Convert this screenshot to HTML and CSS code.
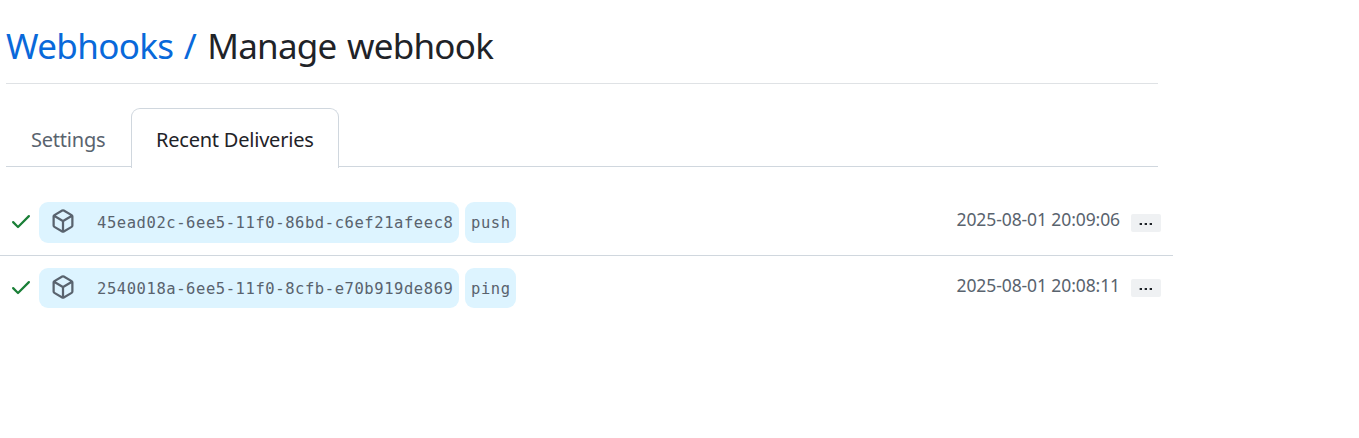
FILE: index.html
```html
<!DOCTYPE html>
<html lang="en">
<head>
<meta charset="utf-8">
<title>Manage webhook</title>
<link rel="stylesheet" href="styles.css">
</head>
<body>
<svg class="sprite" aria-hidden="true">
  <symbol id="check" viewBox="0 0 16 16"><path d="M13.78 4.22a.75.75 0 0 1 0 1.06l-7.25 7.25a.75.75 0 0 1-1.06 0L2.22 9.28a.75.75 0 0 1 1.06-1.06L6 10.94l6.72-6.72a.75.75 0 0 1 1.06 0Z"/></symbol>
  <symbol id="package" viewBox="0 0 16 16"><path d="m8.878.392 5.25 3.045c.54.314.872.89.872 1.514v6.098a1.75 1.75 0 0 1-.872 1.514l-5.25 3.045a1.75 1.75 0 0 1-1.756 0l-5.25-3.045A1.75 1.75 0 0 1 1 11.049V4.951c0-.624.332-1.201.872-1.514L7.122.392a1.75 1.75 0 0 1 1.756 0ZM7.875 1.69l-4.63 2.685L8 7.133l4.755-2.758-4.63-2.685a.248.248 0 0 0-.25 0ZM2.5 5.677v5.372c0 .09.047.171.125.216l4.625 2.683V8.432Zm6.25 8.271 4.625-2.683a.25.25 0 0 0 .125-.216V5.677L8.75 8.432Z"/></symbol>
</svg>
<header class="heading">
  <h1 class="title"><a class="title-link" href="#">Webhooks /</a> <span class="title-page">Manage webhook</span></h1>
</header>
<nav class="tabs">
  <a class="tab tab-settings" href="#">Settings</a>
  <a class="tab tab-active" href="#">Recent Deliveries</a>
</nav>
<ul class="deliveries">
  <li class="delivery">
    <svg class="check"><use href="#check"/></svg>
    <a class="pill pill-id" href="#"><svg class="package"><use href="#package"/></svg><code class="code">45ead02c-6ee5-11f0-86bd-c6ef21afeec8</code></a>
    <span class="pill pill-event"><code class="code">push</code></span>
    <time class="time">2025-08-01 20:09:06</time>
    <button class="more" aria-label="Details"><i class="dot"></i><i class="dot"></i><i class="dot"></i></button>
  </li>
  <li class="delivery">
    <svg class="check"><use href="#check"/></svg>
    <a class="pill pill-id" href="#"><svg class="package"><use href="#package"/></svg><code class="code">2540018a-6ee5-11f0-8cfb-e70b919de869</code></a>
    <span class="pill pill-event"><code class="code">ping</code></span>
    <time class="time">2025-08-01 20:08:11</time>
    <button class="more" aria-label="Details"><i class="dot"></i><i class="dot"></i><i class="dot"></i></button>
  </li>
</ul>
</body>
</html>
```
FILE: styles.css
```css
* { box-sizing: border-box; }
body { margin: 0; background: #fff; color: #1f2328; font-family: "Noto Sans", "Open Sans", sans-serif; }
a { text-decoration: none; }
.sprite { display: none; }
.heading { width: 1152px; height: 84px; margin-left: 6px; padding-top: 22px; border-bottom: 1px solid #dfe2e5; }
.title { display: flex; gap: 11px; margin: 0; font-size: 35px; line-height: 48px; font-weight: 400; white-space: nowrap; letter-spacing: -0.65px; }
.title-link { color: #0969da; word-spacing: 2px; }
.title-page { word-spacing: 2px; letter-spacing: -0.75px; }
.tabs { display: flex; width: 1152px; height: 83px; margin-left: 6px; padding-top: 24px; border-bottom: 1px solid #d0d7de; }
.tab { height: 60px; padding-top: 17px; font-size: 20px; line-height: 30px; letter-spacing: -0.22px; color: #59636e; white-space: nowrap; }
.tab-settings { width: 125px; padding-left: 25px; }
.tab-active { width: 208px; padding-left: 24px; border: 1px solid #d0d7de; border-bottom: 0; border-radius: 9px 9px 0 0; background: #fff; color: #1f2328; padding-top: 16px; }
.deliveries { width: 1173px; margin: 23px 0 0; padding: 0; list-style: none; }
.delivery { display: flex; align-items: flex-start; height: 66px; padding: 12px 12px 0 9px; }
.delivery:first-child { border-bottom: 1px solid #d0d7de; }
.check { width: 24px; height: 24px; margin: 7px 6px 0 0; fill: #1a7f37; }
.pill { display: flex; height: 41px; border-radius: 9px; background: #ddf4ff; color: #59636e; }
.delivery:last-child .pill { height: 40px; }
.pill-id { width: 420px; margin-right: 6px; padding-left: 12px; }
.pill-event { width: 51px; padding-left: 6px; }
.package { width: 24px; height: 24px; margin: 7px 22px 0 0; fill: #59636e; }
.code { font: 15.5px/43px "DejaVu Sans Mono", monospace; letter-spacing: 0.57px; white-space: nowrap; }
.time { margin: 4px 11px 0 auto; font-size: 17.5px; line-height: 26px; color: #59636e; letter-spacing: -0.1px; white-space: nowrap; }
.more { display: flex; gap: 2px; width: 30px; height: 18px; margin-top: 12px; padding: 9px 0 0 8px; border: 0; border-radius: 2px; background: #eff1f3; }
.delivery:last-child .more { margin-top: 11px; }
.dot { width: 3px; height: 2px; background: #1f2328; border-left: 1px solid #a5a9ad; }
```
